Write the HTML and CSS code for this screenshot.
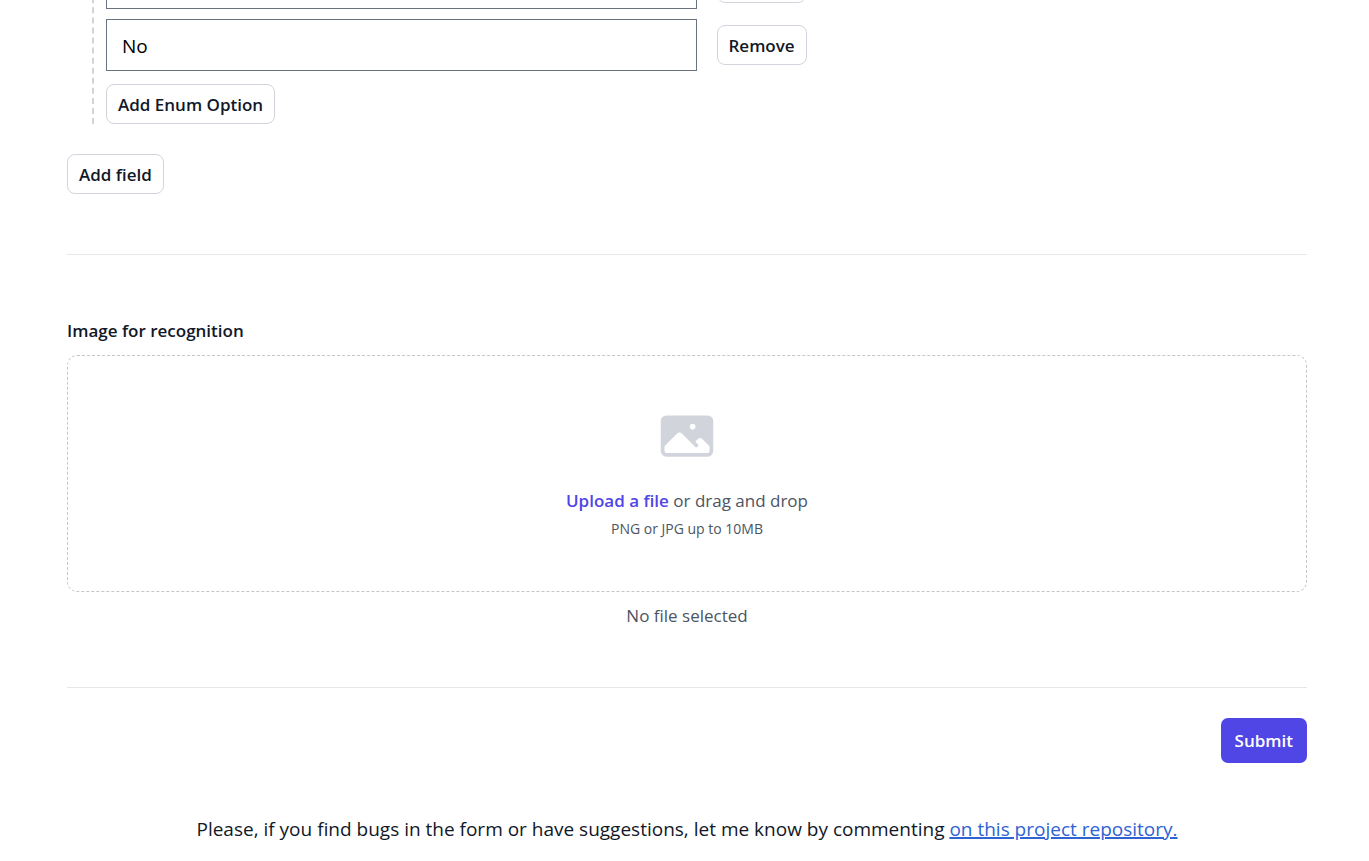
FILE: index.html
```html
<!DOCTYPE html>
<html lang="en">
<head>
<meta charset="utf-8">
<meta name="viewport" content="width=device-width, initial-scale=1">
<title>Image recognition</title>
<link rel="stylesheet" href="styles.css">
</head>
<body>
<main class="page">
  <form class="form">
    <div class="enum-options">
      <div class="option-row">
        <input class="text-input" type="text" aria-label="Enum option">
        <button class="button" type="button" aria-label="Remove"></button>
      </div>
      <div class="option-row">
        <input class="text-input" type="text" aria-label="Enum option" value="No">
        <button class="button" type="button">Remove</button>
      </div>
      <button class="button button-enum" type="button">Add Enum Option</button>
    </div>
    <button class="button button-field" type="button">Add field</button>

    <section class="upload">
      <label class="upload-label" for="image-file">Image for recognition</label>
      <div class="drop-zone">
        <svg class="photo-icon" viewBox="0 0 24 24" fill="currentColor" aria-hidden="true">
          <path fill-rule="evenodd" clip-rule="evenodd" d="M1.5 6a2.25 2.25 0 012.25-2.25h16.5A2.25 2.25 0 0122.5 6v12a2.25 2.25 0 01-2.25 2.25H3.75A2.25 2.25 0 011.5 18V6zM3 16.06V18c0 .414.336.75.75.75h16.5A.75.75 0 0021 18v-1.94l-2.69-2.689a1.5 1.5 0 00-2.12 0l-.88.879.97.97a.75.75 0 11-1.06 1.06l-5.16-5.159a1.5 1.5 0 00-2.12 0L3 16.061zm10.125-7.81a1.125 1.125 0 112.25 0 1.125 1.125 0 01-2.25 0z"/>
        </svg>
        <p class="drop-text"><label class="upload-link" for="image-file">Upload a file</label> or drag and drop</p>
        <input class="file-input" id="image-file" type="file" accept="image/png,image/jpeg">
        <p class="drop-hint">PNG or JPG up to 10MB</p>
      </div>
      <p class="file-status">No file selected</p>
    </section>

    <div class="actions">
      <button class="submit" type="submit">Submit</button>
    </div>
  </form>
  <footer class="footer">Please, if you find bugs in the form or have suggestions, let me know by commenting <a class="footer-link" href="#">on this project repository.</a></footer>
</main>
</body>
</html>
```

FILE: styles.css
```css
* {
  box-sizing: border-box;
}

body {
  margin: 0;
  background: #fff;
  color: #111827;
  font-family: "Segoe UI", "Open Sans", "Noto Sans", sans-serif;
  font-size: 17px;
  line-height: 30px;
}

p {
  margin: 0;
}

button,
input {
  font: inherit;
  color: inherit;
}

.page {
  padding: 0 62px 0 67px;
  overflow: hidden;
}

.form {
  display: flex;
  flex-direction: column;
  /* The first option row is partly scrolled out of view. */
  margin-top: -43px;
}

.enum-options {
  display: flex;
  flex-direction: column;
  gap: 10px;
  margin-left: 25px;
  padding-left: 12px;
  border-left: 2px dashed #d1d5db;
}

.option-row {
  display: grid;
  grid-template-columns: 1fr 1fr;
  align-items: center;
  justify-items: start;
  gap: 20px;
}

.text-input {
  width: 100%;
  height: 52px;
  padding: 1px 15px 0;
  border: 1px solid #6b7280;
  border-radius: 0;
  background: #fff;
  color: #000;
  font-size: 19px;
}

.button {
  min-width: 89px;
  height: 40px;
  padding: 1px 11px 0;
  border: 1px solid #d1d5db;
  border-radius: 8px;
  background: #fff;
  font-weight: 600;
  line-height: 24px;
}

.button-enum {
  align-self: flex-start;
  margin-top: 3px;
}

.button-field {
  align-self: flex-start;
  margin-top: 30px;
}

.upload {
  display: flex;
  flex-direction: column;
  margin-top: 60px;
  padding: 61px 0 56px;
  border: solid #e5e7eb;
  border-width: 1px 0;
}

.upload-label {
  font-weight: 600;
}

.drop-zone {
  display: flex;
  flex-direction: column;
  align-items: center;
  margin-top: 9px;
  padding: 50px 24px;
  border: 1px dashed #c3c6cb;
  border-radius: 10px;
  color: #4b5563;
}

.photo-icon {
  width: 60px;
  height: 60px;
  margin-bottom: 20px;
  color: #d1d5db;
}

.upload-link {
  color: #4f46e5;
  font-weight: 600;
  cursor: pointer;
}

.file-input {
  position: absolute;
  width: 1px;
  height: 1px;
  opacity: 0;
}

.drop-hint {
  font-size: 14px;
  line-height: 25px;
}

.file-status {
  margin-top: 9px;
  color: #4b5563;
  text-align: center;
}

.actions {
  display: flex;
  justify-content: flex-end;
  margin-top: 30px;
}

.submit {
  height: 45px;
  padding: 1px 14px 0;
  border: 0;
  border-radius: 7px;
  background: #4f46e5;
  color: #fff;
  font-weight: 600;
}

.footer {
  margin-top: 51px;
  font-size: 19px;
  text-align: center;
}

.footer-link {
  color: #2f63d3;
  text-decoration: underline;
  text-decoration-thickness: 2px;
}
```
